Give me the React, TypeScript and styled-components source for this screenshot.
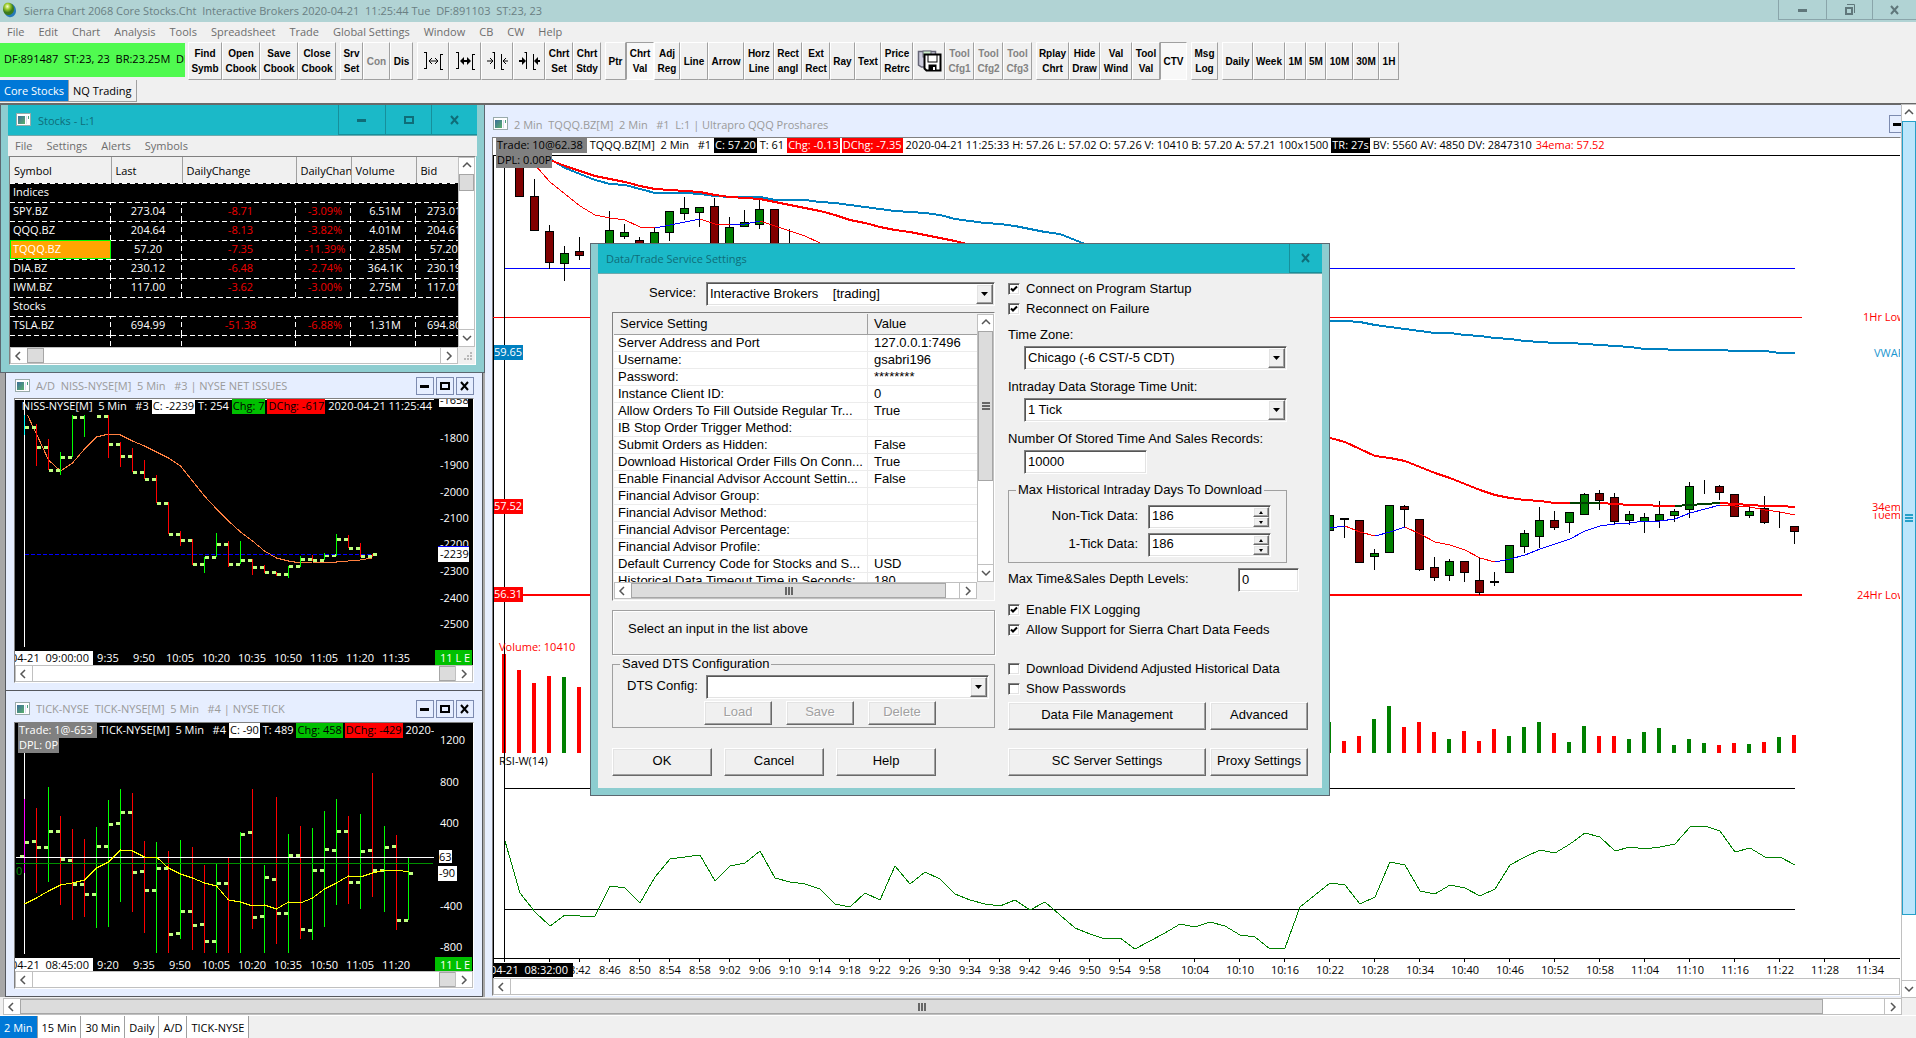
import React from 'react';
import styled, { createGlobalStyle, css } from 'styled-components';

const UI = '"Open Sans", "Noto Sans", sans-serif';
const DLG = '"Liberation Sans", Arial, sans-serif';

const Global = createGlobalStyle`
  *, *::before, *::after { box-sizing: border-box; }
  html, body { margin: 0; padding: 0; }
  body { background: #f0f0f0; font: 11px/15px ${UI}; color: #000; overflow: hidden; }
  button, input, select { font: inherit; color: inherit; margin: 0; border-radius: 0; }
  button { padding: 0; border: 0; background: none; }
`;

/* ---------- shell ---------- */

const Shell = styled.div`
  position: relative;
  display: flex;
  flex-direction: column;
  height: 100vh;
`;

const TitleBar = styled.header`
  display: flex;
  align-items: stretch;
  height: 22px;
  background: #b1d3d4;
  color: #6a7f83;
  white-space: pre;
`;

const AppTitle = styled.h1`
  display: flex;
  align-items: center;
  gap: 7px;
  margin: 0;
  padding: 0 0 2px 2px;
  flex: 1;
  font: inherit;
`;

const Controls = styled.div`
  display: flex;
  height: 20px;
`;

const CaptionButton = styled.button<{ $w: number; $line: string; $ink: string }>`
  display: flex;
  align-items: center;
  justify-content: center;
  width: ${p => p.$w}px;
  border: 1px solid ${p => p.$line};
  border-width: 0 0 1px 1px;
  color: ${p => p.$ink};
`;

const MenuBar = styled.nav`
  display: flex;
  align-items: center;
  gap: 14px;
  height: 20px;
  padding: 0 0 2px 7px;
  background: #f0f0f0;
  color: #6d6d6d;
`;

const Toolbar = styled.div`
  display: flex;
  align-items: stretch;
  gap: 4px;
  height: 38px;
`;

const Feed = styled.output`
  width: 185px;
  height: 34px;
  margin-top: 1px;
  padding-left: 4px;
  margin-right: -1px;
  background: #50fa50;
  line-height: 32px;
  white-space: pre;
  overflow: hidden;
`;

const ToolGroup = styled.div`
  display: flex;
`;

const Tool = styled.button<{ $w: number; $down?: boolean }>`
  display: flex;
  align-items: center;
  justify-content: center;
  width: ${p => p.$w}px;
  border: 1px solid;
  border-color: #fff #a0a0a0 #a0a0a0 #fff;
  font: bold 10px/15px ${DLG};
  text-align: center;
  &:disabled { color: #838383; }
  ${p => p.$down && css`
    background: #f8f8f8;
    border-color: #a0a0a0 #fff #fff #a0a0a0;
  `}
`;

const Tabs = styled.div<{ $h: number }>`
  display: flex;
  height: ${p => p.$h}px;
`;

const Tab = styled.button<{ $on?: boolean }>`
  height: 22px;
  padding: 0 4px;
  border-right: 1px solid #a0a0a0;
  background: ${p => (p.$on ? '#0078d7' : '#fff')};
  color: ${p => (p.$on ? '#fff' : '#000')};
  white-space: nowrap;
`;

const TopTab = styled(Tab)`
  background: ${p => (p.$on ? '#0078d7' : '#f0f0f0')};
  border-bottom: 1px solid #a0a0a0;
`;

/* ---------- workspace ---------- */

const Workspace = styled.main`
  flex: 1;
  min-height: 0;
  display: grid;
  grid-template: minmax(0, 1fr) 18px / minmax(0, 1fr) 15px;
  border-top: 2px solid #696969;
  border-bottom: 1px solid #fff;
`;

const Desk = styled.div`
  display: flex;
  min-height: 0;
  overflow: hidden;
  background: #a8a8a8;
`;

const LeftStack = styled.div`
  flex: none;
  display: flex;
  flex-direction: column;
  width: 485px;
`;

const Child = styled.section<{ $grow?: boolean }>`
  display: flex;
  flex-direction: column;
  flex: ${p => (p.$grow ? '1' : 'none')};
  min-height: 0;
  margin: 0 2px 0 5px;
  padding: 0 8px 7px;
  border: 1px solid #55585e;
  border-width: 0 1px 1px;
  background: #e6eeff;
`;

const MainChild = styled(Child)`
  flex: 1;
  min-width: 0;
  margin: 0;
  padding: 0 0 1px 7px;
  border-width: 0;
`;

const ChildTitle = styled.h2<{ $h: number; $drop?: number }>`
  display: flex;
  align-items: center;
  gap: 5px;
  flex: none;
  height: ${p => p.$h}px;
  margin: 0;
  padding: ${p => p.$drop ?? 0}px 0 0 1px;
  color: #9a9a9a;
  font: inherit;
  white-space: pre;
`;

const TitleText = styled.span`
  flex: 1;
`;

const SmallButton = styled.button<{ $cut?: boolean }>`
  display: flex;
  align-items: center;
  justify-content: center;
  width: 18px;
  height: 18px;
  margin-left: -3px;
  margin-right: ${p => (p.$cut ? -6 : 0)}px;
  border: 1px solid #7d8bb0;
  color: #000;
`;

const ChartFrame = styled.div`
  position: relative;
  flex: 1;
  min-height: 0;
  display: flex;
  flex-direction: column;
  border: 1px solid #808080;
  border-right-color: #fff;
  border-bottom-color: #fff;
  background: #fff;
`;

const Canvas = styled.div<{ $bg: string }>`
  position: relative;
  flex: 1;
  min-height: 0;
  overflow: hidden;
  background: ${p => p.$bg};
  & > svg { display: block; }
`;

const Info = styled.div<{ $w?: number; $ink: string }>`
  position: absolute;
  top: 0;
  left: 3px;
  width: ${p => (p.$w ? p.$w + 'px' : 'auto')};
  display: flex;
  gap: 2px;
  overflow: hidden;
  color: ${p => p.$ink};
  white-space: pre;
`;

const Tag = styled.span<{ $bg?: string; $ink?: string }>`
  padding: 0 1px 2px;
  background: ${p => p.$bg ?? 'transparent'};
  color: ${p => p.$ink ?? 'inherit'};
  line-height: 13px;
`;

const Dpl = styled(Tag)`
  position: absolute;
  top: 15px;
  left: 3px;
`;

const Track = styled.div<{ $vertical?: boolean }>`
  display: flex;
  flex-direction: ${p => (p.$vertical ? 'column' : 'row')};
  flex: none;
  ${p => (p.$vertical ? 'width: 17px;' : 'height: 17px;')}
  border: 1px solid #c0c0c0;
  background: #fff;
`;

const ArrowButton = styled.button<{ $vertical?: boolean }>`
  display: flex;
  flex: none;
  align-items: center;
  justify-content: center;
  ${p => (p.$vertical ? 'height: 16px; width: 100%;' : 'width: 16px; height: 100%;')}
  outline: 1px solid #c0c0c0;
  background: #fff;
  color: #555;
`;

const Thumb = styled.div<{ $size?: string; $blue?: boolean }>`
  display: flex;
  align-items: center;
  justify-content: center;
  flex: ${p => (p.$size ? `0 0 ${p.$size}` : '1')};
  border: 1px solid ${p => (p.$blue ? '#26a0c8' : '#a6a6a6')};
  background: ${p => (p.$blue ? '#bce6fc' : '#dcdcdc')};
`;

const Gap = styled.div<{ $size?: string }>`
  flex: ${p => (p.$size ? `0 0 ${p.$size}` : '1')};
`;

const VWrap = styled.div`
  display: flex;
  & > div { width: 15px; border-width: 0 0 0 1px; }
`;

const HWrap = styled.div`
  grid-column: 1 / -1;
  padding: 1px 14px 0 3px;
`;

/* ---------- quote window ---------- */

const Quote = styled.section`
  flex: none;
  height: 268px;
  display: flex;
  flex-direction: column;
  padding: 0 7px 7px;
  border: 1px solid #5c6770;
  border-top: 0;
  background: #8dcdd0;
`;

const QuoteTitle = styled.h2`
  display: flex;
  flex: none;
  height: 31px;
  margin: 0;
  border-bottom: 1px solid #6fa9ad;
  background: #1bb9c8;
  color: #0f6d78;
  font: inherit;
`;

const QuoteName = styled.span`
  display: flex;
  align-items: center;
  gap: 6px;
  flex: 1;
  padding-left: 8px;
`;

const QuoteControls = styled(Controls)`
  height: 30px;
`;

const QuoteBody = styled.div`
  flex: 1;
  min-height: 0;
  display: grid;
  grid-template: minmax(0, 1fr) 17px / minmax(0, 1fr) 17px;
  margin: 0 1px;
  border: 1px solid #808080;
  border-right-color: #fff;
  border-bottom-color: #fff;
  background: #f0f0f0;
`;

const QuoteView = styled.div`
  overflow: hidden;
  background: #000;
`;

const QuoteTable = styled.table`
  width: 520px;
  table-layout: fixed;
  border-collapse: collapse;
  color: #fff;
  th {
    height: 26px;
    padding: 0 0 0 4px;
    overflow: hidden;
    border-right: 1px solid #a0a0a0;
    background: #f0f0f0;
    color: #000;
    font-weight: normal;
    text-align: left;
  }
`;

const dashH = 'repeating-linear-gradient(90deg, #fff 0 5px, transparent 5px 8px)';
const dashV = 'repeating-linear-gradient(0deg, #fff 0 5px, transparent 5px 8px)';

const QCell = styled.td<{ $red?: boolean; $left?: boolean; $bid?: boolean; $sel?: boolean; $group?: boolean }>`
  height: 19px;
  padding: 0 0 2px 3px;
  text-align: ${p => (p.$left || p.$bid ? 'left' : 'center')};
  color: ${p => (p.$red ? '#f00000' : '#fff')};
  background: ${p => (p.$group
    ? `${dashH} 0 0 / 100% 1px no-repeat`
    : `${dashH} 0 0 / 100% 1px no-repeat, ${dashV} 100% 0 / 1px 100% no-repeat`)};
  ${p => p.$bid && css`padding-left: 11px;`}
  ${p => p.$sel && css`
    background: #ffa500;
    box-shadow: inset 0 0 0 1px #00ff00;
  `}
`;

/* ---------- dialog ---------- */

const Dialog = styled.section`
  position: absolute;
  left: 590px;
  top: 243px;
  width: 740px;
  border: 1px solid #5c6770;
  background: #8dcdd0;
  padding: 0 7px 7px;
  font: 13px/18px ${DLG};
`;

const DialogTitle = styled.h2`
  display: flex;
  height: 30px;
  margin: 0;
  border-bottom: 1px solid #6fa9ad;
  background: #1bb9c8;
  color: #0f6d78;
  font: 11px/29px ${UI};
`;

const DialogName = styled.span`
  flex: 1;
  padding-left: 8px;
`;

const Form = styled.form`
  display: flex;
  gap: 13px;
  padding: 0 0 12px 14px;
  background: #f0f0f0;
`;

const LeftCol = styled.div`
  display: flex;
  flex-direction: column;
  width: 383px;
  padding-top: 8px;
`;

const RightCol = styled.div`
  display: flex;
  flex-direction: column;
  width: 300px;
  padding-top: 5px;
`;

const sunken = css`
  border: 1px solid;
  border-color: #808080 #fff #fff #808080;
  box-shadow: inset 1px 1px 0 #555, inset -1px -1px 0 #e3e3e3;
  background: #fff;
`;

const Sunken = styled.div<{ $w?: number }>`
  display: grid;
  flex: none;
  width: ${p => (p.$w ? p.$w + 'px' : 'auto')};
  height: 24px;
  padding: 1px;
  ${sunken}
  & > * { grid-area: 1 / 1; min-width: 0; }
`;

const Select = styled.select`
  appearance: none;
  border: 0;
  padding: 0 2px;
  background: transparent;
  outline: 0;
`;

const Input = styled.input<{ $w: number }>`
  width: ${p => p.$w}px;
  height: 24px;
  padding: 0 3px 2px;
  outline: 0;
  ${sunken}
`;

const raised = css`
  border: 1px solid;
  border-color: #fff #696969 #696969 #fff;
  box-shadow: inset -1px -1px 0 #a0a0a0, inset 1px 1px 0 #e3e3e3;
  background: #f0f0f0;
`;

const Drop = styled.span`
  display: flex;
  align-items: center;
  justify-content: center;
  justify-self: end;
  width: 17px;
  pointer-events: none;
  ${raised}
`;

const Spin = styled.span`
  display: grid;
  justify-self: end;
  width: 16px;
`;

const SpinButton = styled.button`
  display: flex;
  align-items: center;
  justify-content: center;
  ${raised}
`;

const SpinInput = styled.input`
  border: 0;
  padding: 0 2px 2px;
  background: transparent;
  outline: 0;
  width: 100%;
`;

const Push = styled.button<{ $w: number; $small?: boolean }>`
  flex: none;
  width: ${p => p.$w}px;
  height: ${p => (p.$small ? 24 : 28)}px;
  padding-bottom: 2px;
  ${raised}
  &:disabled { color: #a0a0a0; text-shadow: 1px 1px 0 #fff; }
`;

const Row = styled.div<{ $gap?: number; $top?: number; $left?: number }>`
  display: flex;
  align-items: center;
  gap: ${p => p.$gap ?? 0}px;
  margin-top: ${p => p.$top ?? 0}px;
  padding-left: ${p => p.$left ?? 0}px;
`;

const RowLabel = styled.label<{ $w: number; $end?: boolean }>`
  flex: none;
  width: ${p => p.$w}px;
  text-align: ${p => (p.$end ? 'right' : 'left')};
  padding: 0 ${p => (p.$end ? 10 : 0)}px 2px 0;
  white-space: nowrap;
`;

const Field = styled.div`
  display: grid;
  grid-template-rows: 18px 24px;
  gap: 2px;
  padding: 7px 0 1px;
  & > :last-child { margin-left: 16px; }
`;

const Check = styled.label`
  display: flex;
  align-items: center;
  gap: 6px;
  height: 20px;
`;

const Box = styled.input`
  appearance: none;
  width: 12px;
  height: 12px;
  ${sunken}
  &:checked {
    background: #fff url("data:image/svg+xml,%3Csvg xmlns='http://www.w3.org/2000/svg' width='8' height='8'%3E%3Cpath d='M1 3.5L3 5.5L7 1.5' fill='none' stroke='black' stroke-width='2'/%3E%3C/svg%3E") center no-repeat;
  }
`;

const Checks = styled.div<{ $top: number }>`
  margin-top: ${p => p.$top}px;
`;

const Group = styled.fieldset<{ $w: number; $top: number; $h: number }>`
  width: ${p => p.$w}px;
  height: ${p => p.$h}px;
  min-width: 0;
  margin: ${p => p.$top}px 0 0;
  padding: 0;
  border: 1px solid #a0a0a0;
  & > legend { margin-left: 7px; padding: 0 2px; line-height: 18px; white-space: nowrap; }
`;

const Hint = styled.output`
  height: 45px;
  margin-top: 9px;
  padding: 0 15px;
  border: 1px solid #a0a0a0;
  box-shadow: inset 1px 1px 0 #fff, 1px 1px 0 #fff;
  line-height: 35px;
`;

const ListBox = styled.div`
  display: grid;
  grid-template: minmax(0, 1fr) 17px / minmax(0, 1fr) 17px;
  height: 289px;
  margin-top: 6px;
  padding: 1px 0 1px 1px;
  border: 1px solid;
  border-color: #808080 #fff #fff #808080;
  background: #f0f0f0;
`;

const ListView = styled.div`
  overflow: hidden;
  background: #fff;
`;

const ListTable = styled.table`
  width: 100%;
  table-layout: fixed;
  border-collapse: separate;
  border-spacing: 0;
  white-space: nowrap;
  th {
    height: 21px;
    padding: 0 6px;
    border-right: 1px solid #a0a0a0;
    border-bottom: 1px solid #a0a0a0;
    background: #f0f0f0;
    font-weight: normal;
    text-align: left;
  }
  th:last-child { border-right: 0; }
  td {
    height: 17px;
    padding: 0 0 0 4px;
    overflow: hidden;
    border-right: 1px solid #ececec;
    border-bottom: 1px solid #ececec;
    line-height: 16px;
  }
  td:last-child { padding-left: 6px; border-right: 0; }
`;

/* ---------- glyphs ---------- */

const Chevron = ({ dir }: { dir: 'left' | 'right' | 'up' | 'down' }) => {
  const d = { left: 'M6 1L2 5L6 9', right: 'M3 1L7 5L3 9', up: 'M1 6L5 2L9 6', down: 'M1 3L5 7L9 3' }[dir];
  return <svg width="10" height="10" fill="none" stroke="currentColor" strokeWidth="1.500"><path d={d} /></svg>;
};

const MinGlyph = () => <svg width="10" height="10"><rect y="4" width="9" height="3" fill="currentColor" /></svg>;
const MaxGlyph = () => (
  <svg width="10" height="10"><rect x="1" y="2" width="8" height="6" fill="none" stroke="currentColor" strokeWidth="2" /></svg>
);
const CloseGlyph = () => (
  <svg width="10" height="10" stroke="currentColor" strokeWidth="2"><path d="M1 1L8 9M8 1L1 9" /></svg>
);
const RestoreGlyph = () => (
  <svg width="12" height="12" fill="none" stroke="currentColor">
    <rect x="2" y="4" width="6" height="6" strokeWidth="2" /><path d="M3 0.5H10.500V9" />
  </svg>
);

const WindowIcon = () => (
  <svg width="16" height="14">
    <defs><linearGradient id="wi" x2="1" y2="1"><stop stopColor="#3c6e9c" /><stop offset="1" stopColor="#59b06b" /></linearGradient></defs>
    <rect x="0.500" y="0.500" width="14" height="12" fill="#fff" stroke="#9aa" />
    <rect x="2" y="3" width="7" height="8" fill="url(#wi)" />
    <rect x="12" y="3" width="1" height="3" fill="#4ba27c" /><rect x="10" y="3" width="1" height="8" fill="#dde" />
  </svg>
);

const Globe = () => (
  <svg width="15" height="16">
    <defs><radialGradient id="gl" cx="0.4" cy="0.300"><stop stopColor="#f8ffd0" /><stop offset="0.500" stopColor="#9bc92a" /><stop offset="1" stopColor="#3c7a1c" /></radialGradient></defs>
    <path d="M5 2C10 0 14 4 14 9C14 13 10 16 7 15C3 14 2 10 2 7C2 4 3 3 5 2Z" fill="#2779b8" />
    <path d="M4 1C9 0 12 3 12 7C12 11 9 13 6 13C3 13 1 10 1 7C1 4 2 2 4 1Z" fill="url(#gl)" />
  </svg>
);

const Spread = ({ bold, inward }: { bold?: boolean; inward?: boolean }) => (
  <svg width="21" height="20" fill="none" stroke="#000">
    {inward ? (
      <>
        <path d="M7.500 1V18M14.500 3V19M5.500 1.500H7M14.500 18.500H17" />
        <path d={bold ? 'M0 10H4M21 10H17' : 'M0 10H6M21 10H16'} strokeWidth={bold ? 2 : 1} />
        {bold ? <path d="M3 6L7 10L3 14ZM19 6L15 10L19 14Z" fill="#000" stroke="none" /> : <path d="M3 7L6 10L3 13M19 7L16 10L19 13" />}
      </>
    ) : (
      <>
        <path d="M3.500 1V18M17.500 3V19M1 1.500H3M1 17.500H3M17.500 3.500H20M17.500 18.500H20" />
        <path d="M6 10H15" strokeWidth={bold ? 2 : 1} />
        {bold ? <path d="M9 6L5 10L9 14ZM12 6L16 10L12 14Z" fill="#000" stroke="none" /> : <path d="M9 7L6 10L9 13M12 7L15 10L12 13" />}
      </>
    )}
  </svg>
);

const Disks = () => (
  <svg width="25" height="22" fill="#fff" stroke="#000">
    <path d="M1.500 1.500H18.500V17H4.500L1.500 15Z" stroke="#667" strokeWidth="1.500" fill="#ccd" />
    <rect x="6" y="1" width="8" height="6" fill="#cec" stroke="#667" />
    <path d="M7.500 4.500H23.500V20.500H9.500L7.500 18.500Z" strokeWidth="2" />
    <rect x="11" y="5" width="9" height="7" /><rect x="12" y="15" width="7" height="5" fill="#000" />
    <rect x="16" y="17" width="2" height="3" stroke="none" />
  </svg>
);

const DownTri = () => <svg width="7" height="4"><path d="M0 0H7L3.500 4Z" /></svg>;
const SpinTri = ({ up }: { up?: boolean }) => <svg width="4" height="3"><path d={up ? 'M0 3H4L2 0Z' : 'M0 0H4L2 3Z'} /></svg>;
const Grip = ({ vertical, blue }: { vertical?: boolean; blue?: boolean }) => (
  <svg width="8" height="8" stroke={blue ? '#26a0c8' : '#666'} strokeWidth="2">
    <path d={vertical ? 'M0 1H8M0 4H8M0 7H8' : 'M1 0V8M4 0V8M7 0V8'} />
  </svg>
);
const SizeGrip = () => (
  <svg width="17" height="17" fill="#b8b8b8">
    {[[12, 5], [9, 8], [12, 8], [6, 11], [9, 11], [12, 11]].map(([x, y]) => <rect key={`${x}-${y}`} x={x} y={y} width="2" height="2" />)}
  </svg>
);

/* ---------- tool definitions ---------- */

type ToolDef = { t?: string; w: number; off?: boolean; down?: boolean; icon?: React.ReactNode };
const TOOLS: ToolDef[][] = [
  [{ t: 'Find Symb', w: 34 }, { t: 'Open Cbook', w: 38 }, { t: 'Save Cbook', w: 38 }, { t: 'Close Cbook', w: 38 }],
  [{ t: 'Srv Set', w: 23 }, { t: 'Con', w: 27, off: true }, { t: 'Dis', w: 23 }],
  [
    { icon: <Spread />, w: 32 }, { icon: <Spread bold />, w: 32 }, { icon: <Spread inward />, w: 32 }, { icon: <Spread inward bold />, w: 32 },
    { t: 'Chrt Set', w: 28 }, { t: 'Chrt Stdy', w: 28 },
  ],
  [
    { t: 'Ptr', w: 21 }, { t: 'Chrt Val', w: 28, down: true }, { t: 'Adj Reg', w: 26 }, { t: 'Line', w: 28 }, { t: 'Arrow', w: 36 },
    { t: 'Horz Line', w: 30 }, { t: 'Rect angl', w: 28 }, { t: 'Ext Rect', w: 28 }, { t: 'Ray', w: 25 }, { t: 'Text', w: 26 },
    { t: 'Price Retrc', w: 32 }, { icon: <Disks />, w: 32 }, { t: 'Tool Cfg1', w: 29, off: true }, { t: 'Tool Cfg2', w: 29, off: true },
    { t: 'Tool Cfg3', w: 29, off: true },
  ],
  [{ t: 'Rplay Chrt', w: 33 }, { t: 'Hide Draw', w: 31 }, { t: 'Val Wind', w: 32 }, { t: 'Tool Val', w: 28 }, { t: 'CTV', w: 27, down: true }],
  [{ t: 'Msg Log', w: 27 }],
  [
    { t: 'Daily', w: 31 }, { t: 'Week', w: 32 }, { t: '1M', w: 21 }, { t: '5M', w: 20 }, { t: '10M', w: 27 }, { t: '30M', w: 26 }, { t: '1H', w: 20 },
  ],
];

/* ---------- main chart ---------- */

const bx = (i: number) => 505 + 15 * i;
const line = (from: number, ys: number[]) => ys.map((y, i) => `${bx(from + i)},${y}`).join(' ');

// bar, colour, body top, body bottom, wick top, wick bottom
type Candle = [number, 'g' | 'r', number, number, number, number];
const CANDLES: Candle[] = [
  [1, 'r', 150, 196, 150, 196], [2, 'r', 196, 230, 179, 230], [3, 'r', 231, 262, 225, 268], [4, 'g', 253, 263, 246, 280],
  [5, 'r', 251, 255, 237, 259], [7, 'g', 230, 260, 211, 260], [8, 'g', 232, 236, 224, 238], [9, 'r', 240, 260, 237, 260],
  [10, 'g', 232, 260, 228, 260], [11, 'g', 211, 232, 211, 240], [12, 'g', 208, 213, 197, 219], [13, 'g', 207, 212, 207, 226],
  [14, 'r', 206, 260, 198, 260], [15, 'g', 227, 260, 217, 260], [16, 'g', 222, 226, 210, 226], [17, 'g', 209, 224, 200, 228],
  [18, 'r', 209, 260, 209, 260], [19, 'r', 260, 270, 229, 270],
  [55, 'g', 515, 530, 515, 530], [56, 'r', 518, 519, 518, 537], [57, 'r', 520, 562, 520, 562], [58, 'g', 553, 556, 549, 569],
  [59, 'g', 505, 552, 505, 552], [60, 'r', 506, 509, 505, 527], [61, 'r', 519, 569, 519, 570], [62, 'r', 567, 577, 557, 580],
  [63, 'g', 561, 575, 559, 580], [64, 'r', 561, 572, 561, 581], [65, 'r', 580, 592, 557, 594], [66, 'r', 581, 582, 572, 585],
  [67, 'g', 545, 572, 545, 572], [68, 'g', 533, 546, 530, 552], [69, 'g', 520, 536, 507, 547], [70, 'r', 520, 527, 511, 529],
  [71, 'g', 512, 522, 512, 532], [72, 'g', 494, 514, 493, 514], [73, 'r', 493, 500, 490, 509], [74, 'r', 497, 521, 493, 523],
  [75, 'g', 514, 520, 511, 524], [76, 'g', 517, 521, 513, 532], [77, 'g', 514, 520, 501, 527], [78, 'g', 511, 515, 509, 521],
  [79, 'g', 486, 509, 482, 517], [80, 'r', 486, 486, 480, 493], [81, 'r', 486, 492, 485, 499], [82, 'r', 494, 516, 494, 516],
  [83, 'g', 511, 515, 505, 517], [84, 'r', 508, 522, 496, 523], [85, 'r', 522, 522, 512, 527], [86, 'r', 526, 531, 526, 543],
];

const VWAP_A = [159, 168, 174, 180, 184, 185, 189, 193, 193, 193, 194, 196, 197, 197, 197, 200, 200, 200, 202, 203, 205, 207, 209, 211, 212, 213, 215, 219, 221, 223, 224, 226, 229, 232, 234, 240, 246];
const EMA_A = [160, 166, 171, 176, 179, 182, 186, 189, 190, 191, 192, 195, 197, 198, 199, 202, 205, 208, 211, 215, 220, 223, 227, 230, 232, 235, 238, 241, 245];
const FAST_A = [165, 182, 194, 206, 215, 218, 220, 227, 228, 225, 222, 219, 224, 224, 224, 221, 226, 231, 236, 243];
const VWAP_B = [321, 321, 322, 325, 327, 329, 331, 333, 333, 335, 336, 338, 339, 341, 342, 343, 343, 344, 345, 346, 347, 349, 349, 350, 350, 350, 350, 351, 351, 351, 353, 353];
const EMA_B = [438, 442, 449, 456, 458, 461, 467, 473, 478, 484, 490, 495, 498, 500, 501, 503, 503, 503, 503, 504, 505, 505, 506, 506, 505, 504, 503, 504, 505, 506, 506, 507];
const FAST_B = [528, 526, 532, 536, 532, 527, 534, 542, 545, 550, 558, 562, 559, 555, 549, 544, 539, 531, 526, 524, 523, 521, 521, 519, 513, 509, 505, 506, 507, 510, 512, 515];
const RSI = [
  841, 893, 912, 926, 915, 916, 916, 886, 888, 903, 877, 859, 857, 855, 881, 866, 863, 851, 878, 882, 884, 889, 904, 907, 893, 900, 866, 884, 872,
  879, 894, 900, 904, 906, 900, 910, 902, 915, 928, 934, 939, 938, 949, 941, 933, 924, 927, 922, 926, 935, 937, 949, 948, 907, 895, 883, 885, 904,
  897, 862, 865, 891, 894, 885, 888, 896, 889, 865, 857, 850, 853, 844, 833, 837, 851, 847, 849, 847, 844, 827, 826, 831, 852, 848, 857, 857, 865,
];
const VOL_A: [number, string][] = [[654, 'r'], [670, 'r'], [683, 'r'], [676, 'r'], [677, 'g'], [687, 'r']];
const VOL_B: [number, string][] = [
  [722, 'g'], [741, 'r'], [736, 'r'], [719, 'g'], [706, 'g'], [727, 'r'], [722, 'r'], [732, 'r'], [739, 'g'], [731, 'r'], [741, 'r'], [729, 'r'],
  [736, 'g'], [727, 'g'], [722, 'g'], [733, 'r'], [742, 'g'], [726, 'g'], [736, 'r'], [736, 'r'], [739, 'g'], [732, 'g'], [728, 'g'], [745, 'g'],
  [739, 'g'], [743, 'g'], [745, 'r'], [743, 'r'], [744, 'g'], [742, 'r'], [737, 'g'], [735, 'r'],
];

const clock = (bar: number) => {
  const m = 8 * 60 + 32 + bar * 2;
  return `${Math.floor(m / 60)}:${String(m % 60).padStart(2, '0')}`;
};
const TIME_BARS = [...Array.from({ length: 20 }, (_, i) => 5 + 2 * i), ...Array.from({ length: 16 }, (_, i) => 46 + 3 * i)];

const SvgText = styled.text<{ $mid?: boolean }>`
  font: 11px ${UI};
  text-anchor: ${p => (p.$mid ? 'middle' : 'start')};
  white-space: pre;
`;

const MainChart = () => (
  <svg width="1408" height="840" viewBox="493 138 1408 840" fill="none" shapeRendering="crispEdges">
    <path d="M493 155.500H1901M493.500 155V978" stroke="#000" />
    <path d="M505 268.500H1795" stroke="#00f" />
    <path d="M493 317.500H1802" stroke="#f00" />
    <path d="M505 595H1802" stroke="#f00" strokeWidth="2" />
    <path d="M505 788.500H1795M505 909.500H1795M493 958.500H1901" stroke="#000" />
    {VOL_A.map(([y, c], i) => <rect key={i} x={bx(i) - 3} y={y} width="4" height={753 - y} fill={c === 'g' ? '#008000' : '#f00'} />)}
    {VOL_B.map(([y, c], i) => <rect key={i} x={bx(i + 55) - 3} y={y} width="4" height={753 - y} fill={c === 'g' ? '#008000' : '#f00'} />)}
    <path d="M504.500 168V961" stroke="#000" />
    {TIME_BARS.concat(0, 3).map(i => <path key={i} d={`M${bx(i) - 0.5} 958V962`} stroke="#000" />)}
    {CANDLES.map(([i, c, t, b, wt, wb]) => (
      <g key={i} stroke="#000">
        <path d={`M${bx(i) - 0.5} ${wt}V${wb + 1}`} />
        <rect x={bx(i) - 4.5} y={t + 0.5} width="8" height={b - t} fill={c === 'g' ? '#008000' : '#800000'} />
      </g>
    ))}
    <g strokeWidth="2">
      <polyline points={line(3, VWAP_A)} stroke="#0080c0" />
      <polyline points={line(55, VWAP_B)} stroke="#0080c0" />
      <polyline points={line(3, EMA_A)} stroke="#f00" />
      <polyline points={line(55, EMA_B)} stroke="#f00" />
      <polyline points={line(71, EMA_B.slice(16, 19))} stroke="#004000" />
      <polyline points={line(78, EMA_B.slice(23, 27))} stroke="#004000" />
    </g>
    <polyline points={line(2, FAST_A)} stroke="#f00" />
    <polyline points={line(10, FAST_A.slice(8, 12))} stroke="#00f" />
    <polyline points={line(15, FAST_A.slice(13, 16))} stroke="#00f" />
    <polyline points={line(55, FAST_B)} stroke="#f00" />
    <polyline points={line(55, FAST_B.slice(0, 2))} stroke="#00f" />
    <polyline points={line(58, FAST_B.slice(3, 6))} stroke="#00f" />
    <polyline points={line(66, FAST_B.slice(11, 27))} stroke="#00f" />
    <polyline points={line(0, RSI)} stroke="#008000" />
    <rect x="494" y="345" width="29" height="15" fill="#0080c0" />
    <rect x="494" y="499" width="29" height="15" fill="#f00" />
    <rect x="494" y="587" width="29" height="15" fill="#f00" />
    <g fill="#fff">
      <SvgText x="494" y="356">59.65</SvgText>
      <SvgText x="494" y="510">57.52</SvgText>
      <SvgText x="494" y="598">56.31</SvgText>
    </g>
    <g fill="#f00">
      <SvgText x="1863" y="321">1Hr Low</SvgText>
      <SvgText x="1872" y="519">10ema</SvgText>
      <rect x="1870" y="500" width="31" height="13" fill="#fff" />
      <SvgText x="1872" y="511">34ema</SvgText>
      <SvgText x="1857" y="599">24Hr Low</SvgText>
      <SvgText x="499" y="651">Volume: 10410</SvgText>
    </g>
    <SvgText x="1874" y="357" fill="#1a96d0">VWAP</SvgText>
    <SvgText x="499" y="765" fill="#000">RSI-W(14)</SvgText>
    <g fill="#000">
      {TIME_BARS.map(i => <SvgText key={i} $mid x={bx(i)} y="974">{clock(i)}</SvgText>)}
    </g>
    <rect x="493" y="963" width="80" height="14" fill="#000" />
    <SvgText x="490" y="974" fill="#fff">{'04-21  08:32:00'}</SvgText>
  </svg>
);

/* ---------- small dark charts: values are held on a grid of three steps per pixel ---------- */

const px = (v: number) => Math.round(v / 3);
const sx = (i: number) => 24 + 12 * i;

// colour, high, low, open, close (0 = off the chart)
type Bar = [string, number, number, number, number];
const G = '#00ff00', R = '#ff0000';

const NISS: Bar[] = [
  ['#00ffff', 148, 208, 0, 184], [R, 174, 299, 184, 244], [R, 220, 313, 244, 313], [G, 259, 329, 313, 274], [G, 148, 274, 274, 154],
  [G, 148, 215, 154, 0], [R, 0, 0, 0, 151], [R, 148, 276, 151, 235], [R, 228, 302, 235, 271], [R, 247, 319, 271, 319], [R, 283, 340, 319, 340],
  [R, 328, 412, 340, 412], [R, 409, 505, 412, 505], [R, 496, 540, 505, 523], [R, 520, 598, 523, 595], [G, 573, 620, 595, 574],
  [G, 502, 574, 574, 535], [R, 526, 604, 535, 595], [G, 526, 595, 595, 583], [R, 580, 627, 583, 604], [R, 598, 622, 604, 619],
  [R, 619, 632, 619, 625], [G, 601, 638, 625, 601], [G, 571, 605, 601, 580], [R, 568, 586, 580, 583], [G, 562, 583, 583, 568],
  [G, 505, 571, 568, 520], [R, 508, 547, 520, 547], [R, 532, 573, 547, 571], [R, 565, 575, 571, 565],
];
const NISS_MA = [130, 205, 283, 316, 290, 248, 214, 205, 208, 226, 241, 257, 275, 301, 344, 391, 428, 464, 497, 526, 556, 577, 586, 592, 589, 589, 589, 584, 581, 577];

const TICK: Bar[] = [
  ['#ff00ff', 327, 549, 498, 457], [R, 354, 609, 454, 472], [G, 291, 576, 472, 424], [R, 378, 645, 424, 508], [R, 417, 690, 511, 583],
  [R, 447, 681, 583, 613], [G, 411, 714, 613, 469], [G, 330, 711, 469, 403], [G, 297, 636, 400, 367], [R, 309, 666, 367, 547],
  [R, 453, 729, 544, 601], [G, 456, 789, 601, 535], [R, 483, 789, 535, 733], [G, 450, 747, 730, 664], [R, 471, 780, 664, 706],
  [R, 525, 789, 703, 754], [G, 520, 789, 754, 580], [R, 504, 789, 580, 0], [G, 426, 789, 0, 433], [R, 297, 717, 427, 682],
  [G, 525, 789, 679, 562], [R, 321, 762, 568, 670], [G, 432, 789, 670, 496], [R, 408, 747, 496, 718], [G, 414, 750, 721, 541],
  [G, 363, 711, 541, 478], [G, 327, 645, 481, 424], [R, 378, 642, 424, 577], [G, 372, 657, 577, 484], [R, 249, 621, 481, 541],
  [G, 408, 666, 541, 472], [R, 435, 720, 469, 691], [G, 504, 691, 691, 550],
];
const TICK_MA = [643, 625, 603, 586, 580, 571, 535, 516, 481, 484, 500, 502, 534, 551, 565, 580, 588, 630, 636, 649, 646, 658, 637, 640, 625, 598, 580, 559, 562, 549, 541, 541, 547];

const Bars = ({ bars }: { bars: Bar[] }) => (
  <g shapeRendering="crispEdges">
    {bars.map(([c, h, l], i) => <rect key={i} x={sx(i)} y={px(h)} width="1" height={px(l - h)} fill={c} />)}
    {bars.map(([, , , o, cl], i) => (
      <g key={i} fill="#c0ff80">
        {o > 0 && <rect x={sx(i) - 4} y={px(o) - 1} width="4" height="3" />}
        {cl > 0 && <rect x={sx(i) + 1} y={px(cl) - 1} width="4" height="3" />}
      </g>
    ))}
  </g>
);

const Average = ({ ys, color }: { ys: number[]; color: string }) => (
  <polyline points={ys.map((y, i) => `${sx(i) + 0.5},${px(y)}`).join(' ')} fill="none" stroke={color} shapeRendering="crispEdges" />
);

const Times = ({ y, labels, start }: { y: number; labels: string[]; start: string }) => (
  <g>
    <g fill="#fff">{labels.map((t, i) => <SvgText key={t} $mid x={108 + 36 * i} y={y}>{t}</SvgText>)}</g>
    <rect x="15" y={y - 11} width="78" height="14" fill="#fff" />
    <SvgText x="11" y={y}>{start}</SvgText>
    <rect x="435" y={y - 12} width="37" height="15" fill="#00c000" />
    <SvgText x="440" y={y} fill="#fff">11 L E</SvgText>
  </g>
);

const NissChart = () => (
  <svg width="458" height="266" viewBox="15 33 458 266">
    <rect x="24" y="34" width="1" height="247" fill="#fff" />
    <Average ys={NISS_MA} color="#ff8040" />
    <Bars bars={NISS} />
    <path d="M25 188.500H373" stroke="#00f" strokeDasharray="4 2" />
    <rect x="15" y="33" width="420" height="16" fill="#000" />
    <rect x="24" y="34" width="1" height="15" fill="#fff" />
    <path d="M15 33.500H434" stroke="#fff" />
    <g fill="#fff">
      {[[-1800, 217], [-1900, 296], [-2000, 377], [-2100, 455], [-2200, 533], [-2300, 614], [-2400, 695], [-2500, 773]].map(([v, y]) => (
        <SvgText key={v} x="440" y={px(y) + 4}>{v}</SvgText>
      ))}
      <rect x="439" y="30" width="29" height="11" /><rect x="438" y="181" width="31" height="15" />
    </g>
    <path d="M438 180.500H469" stroke="#00f" />
    <SvgText x="440" y="38">-1658</SvgText>
    <SvgText x="440" y="192">-2239</SvgText>
    <Times y={296} start={'04-21  09:00:00'} labels={['9:35', '9:50', '10:05', '10:20', '10:35', '10:50', '11:05', '11:20', '11:35']} />
  </svg>
);

const TickChart = () => (
  <svg width="458" height="250" viewBox="15 33 458 250">
    <rect x="24" y="34" width="1" height="230" fill="#fff" />
    <Bars bars={TICK} />
    <path d="M16 167.500H434" stroke="#fff" /><path d="M16 173.500H433" stroke="#009000" />
    <Average ys={TICK_MA} color="#ff0" />
    <g fill="#fff">
      {[[1200, 149], [800, 275], [400, 398], [-400, 647], [-800, 770]].map(([v, y]) => (
        <SvgText key={v} x="440" y={px(y) + 4}>{v}</SvgText>
      ))}
      <rect x="439" y="160" width="13" height="13" /><rect x="438" y="176" width="19" height="15" />
    </g>
    <SvgText x="439" y="171">63</SvgText>
    <SvgText x="439" y="187">-90</SvgText>
    <SvgText x="16" y="185" fill="#009000">0</SvgText>
    <Times y={279} start={'04-21  08:45:00'} labels={['9:20', '9:35', '9:50', '10:05', '10:20', '10:35', '10:50', '11:05', '11:20']} />
  </svg>
);

/* ---------- pieces ---------- */

const Scroll = ({ vertical, open, children }: { vertical?: boolean; open?: boolean; children?: React.ReactNode }) => (
  <Track $vertical={vertical}>
    <ArrowButton type="button" $vertical={vertical} aria-label="Scroll back"><Chevron dir={vertical ? 'up' : 'left'} /></ArrowButton>
    {children}
    {!open && (
      <ArrowButton type="button" $vertical={vertical} aria-label="Scroll forward"><Chevron dir={vertical ? 'down' : 'right'} /></ArrowButton>
    )}
  </Track>
);

const Combo = ({ id, value, w }: { id: string; value: string; w?: number }) => (
  <Sunken $w={w}>
    <Select id={id} defaultValue={value}><option value={value}>{value}</option></Select>
    <Drop><DownTri /></Drop>
  </Sunken>
);

const Stepper = ({ id, value }: { id: string; value: string }) => (
  <Sunken $w={123}>
    <SpinInput id={id} defaultValue={value} />
    <Spin>
      <SpinButton type="button" aria-label="Increase"><SpinTri up /></SpinButton>
      <SpinButton type="button" aria-label="Decrease"><SpinTri /></SpinButton>
    </Spin>
  </Sunken>
);

const Option = ({ text, on }: { text: string; on?: boolean }) => (
  <Check><Box type="checkbox" defaultChecked={on} />{text}</Check>
);

const ChildButtons = () => (
  <>
    <SmallButton aria-label="Minimize"><MinGlyph /></SmallButton>
    <SmallButton aria-label="Maximize"><MaxGlyph /></SmallButton>
    <SmallButton aria-label="Close"><CloseGlyph /></SmallButton>
  </>
);

const QUOTES = [
  ['Indices'], ['SPY.BZ', '273.04', '-8.71', '-3.09%', '6.51M', '273.01'], ['QQQ.BZ', '204.64', '-8.13', '-3.82%', '4.01M', '204.61'],
  ['TQQQ.BZ', '57.20', '-7.35', '-11.39%', '2.85M', ' 57.20'], ['DIA.BZ', '230.12', '-6.48', '-2.74%', '364.1K', '230.19'],
  ['IWM.BZ', '117.00', '-3.62', '-3.00%', '2.75M', '117.01'], ['Stocks'], ['TSLA.BZ', '694.99', '-51.38', '-6.88%', '1.31M', '694.80'],
  ['', '', '', '', '', ''],
];

const SETTINGS = [
  ['Server Address and Port', '127.0.0.1:7496'], ['Username:', 'gsabri196'], ['Password:', '********'], ['Instance Client ID:', '0'],
  ['Allow Orders To Fill Outside Regular Tr...', 'True'], ['IB Stop Order Trigger Method:', ''], ['Submit Orders as Hidden:', 'False'],
  ['Download Historical Order Fills On Conn...', 'True'], ['Enable Financial Advisor Account Settin...', 'False'],
  ['Financial Advisor Group:', ''], ['Financial Advisor Method:', ''], ['Financial Advisor Percentage:', ''],
  ['Financial Advisor Profile:', ''], ['Default Currency Code for Stocks and S...', 'USD'], ['Historical Data Timeout Time in Seconds:', '180'],
];

const QuoteWindow = () => (
  <Quote>
    <QuoteTitle>
      <QuoteName><WindowIcon />Stocks - L:1</QuoteName>
      <QuoteControls>
        <CaptionButton $w={47} $line="#178f9b" $ink="#0f6d78" aria-label="Minimize"><MinGlyph /></CaptionButton>
        <CaptionButton $w={46} $line="#178f9b" $ink="#0f6d78" aria-label="Maximize"><MaxGlyph /></CaptionButton>
        <CaptionButton $w={46} $line="#178f9b" $ink="#0f6d78" aria-label="Close"><CloseGlyph /></CaptionButton>
      </QuoteControls>
    </QuoteTitle>
    <MenuBar>{['File', 'Settings', 'Alerts', 'Symbols'].map(m => <span key={m}>{m}</span>)}</MenuBar>
    <QuoteBody>
      <QuoteView>
        <QuoteTable>
          <colgroup>{[101, 71, 114, 55, 65, 114].map((w, i) => <col key={i} width={w} />)}</colgroup>
          <thead><tr>{['Symbol', 'Last', 'DailyChange', 'DailyChange', 'Volume', 'Bid'].map((h, i) => <th key={i}>{h}</th>)}</tr></thead>
          <tbody>
            {QUOTES.map((r, i) => (
              <tr key={i}>
                {r.length === 1
                  ? <QCell $left $group colSpan={6}>{r[0]}</QCell>
                  : r.map((c, k) => (
                    <QCell key={k} $left={k === 0} $bid={k === 5} $red={k === 2 || k === 3} $sel={c === 'TQQQ.BZ'}>
                      {c.replace(' ', '\u00a0')}
                    </QCell>
                  ))}
              </tr>
            ))}
          </tbody>
        </QuoteTable>
      </QuoteView>
      <Scroll vertical><Thumb $size="17px" /><Gap /></Scroll>
      <Scroll><Thumb $size="17px" /><Gap /></Scroll>
      <SizeGrip />
    </QuoteBody>
  </Quote>
);

const SettingsDialog = () => (
  <Dialog role="dialog" aria-label="Data/Trade Service Settings">
    <DialogTitle>
      <DialogName>Data/Trade Service Settings</DialogName>
      <CaptionButton $w={33} $line="#178f9b" $ink="#0f6d78" aria-label="Close"><CloseGlyph /></CaptionButton>
    </DialogTitle>
    <Form onSubmit={e => e.preventDefault()}>
      <LeftCol>
        <Row>
          <RowLabel $w={94} $end htmlFor="service">Service:</RowLabel>
          <Combo id="service" w={289} value={'Interactive Brokers\u00a0\u00a0\u00a0\u00a0[trading]'} />
        </Row>
        <ListBox>
          <ListView>
            <ListTable>
              <colgroup><col width="254" /><col /></colgroup>
              <thead><tr><th>Service Setting</th><th>Value</th></tr></thead>
              <tbody>{SETTINGS.map(([k, v]) => <tr key={k}><td>{k}</td><td>{v}</td></tr>)}</tbody>
            </ListTable>
          </ListView>
          <Scroll vertical><Thumb $size="150px"><Grip vertical /></Thumb><Gap /></Scroll>
          <Scroll><Thumb $size="315px"><Grip /></Thumb><Gap /></Scroll>
        </ListBox>
        <Hint>Select an input in the list above</Hint>
        <Group $w={383} $top={0} $h={73}>
          <legend>Saved DTS Configuration</legend>
          <Row $left={14} $top={2}>
            <RowLabel $w={79} htmlFor="dts">DTS Config:</RowLabel>
            <Combo id="dts" w={283} value="" />
          </Row>
          <Row $left={91} $top={2} $gap={14}>
            {['Load', 'Save', 'Delete'].map(b => <Push key={b} type="button" disabled $small $w={68}>{b}</Push>)}
          </Row>
        </Group>
        <Row $top={20} $gap={12}>
          {['OK', 'Cancel', 'Help'].map(b => <Push key={b} type="button" $w={100}>{b}</Push>)}
        </Row>
      </LeftCol>
      <RightCol>
        <Option on text="Connect on Program Startup" />
        <Option on text="Reconnect on Failure" />
        <Field><label htmlFor="tz">Time Zone:</label><Combo id="tz" w={263} value="Chicago (-6 CST/-5 CDT)" /></Field>
        <Field><label htmlFor="unit">Intraday Data Storage Time Unit:</label><Combo id="unit" w={263} value="1 Tick" /></Field>
        <Field><label htmlFor="rec">Number Of Stored Time And Sales Records:</label><Input id="rec" $w={123} defaultValue="10000" /></Field>
        <Group $w={279} $top={6} $h={82}>
          <legend>Max Historical Intraday Days To Download</legend>
          <Row $top={6}><RowLabel $w={139} $end htmlFor="nt">Non-Tick Data:</RowLabel><Stepper id="nt" value="186" /></Row>
          <Row $top={4}><RowLabel $w={139} $end htmlFor="ot">1-Tick Data:</RowLabel><Stepper id="ot" value="186" /></Row>
        </Group>
        <Row $top={5}>
          <RowLabel $w={230} htmlFor="depth">Max Time&amp;Sales Depth Levels:</RowLabel>
          <Input id="depth" $w={61} defaultValue="0" />
        </Row>
        <Checks $top={8}>
          <Option on text="Enable FIX Logging" />
          <Option on text="Allow Support for Sierra Chart Data Feeds" />
        </Checks>
        <Checks $top={19}>
          <Option text="Download Dividend Adjusted Historical Data" />
          <Option text="Show Passwords" />
        </Checks>
        <Row $top={3} $gap={4}>
          <Push type="button" $w={198}>Data File Management</Push><Push type="button" $w={98}>Advanced</Push>
        </Row>
        <Row $top={18} $gap={4}>
          <Push type="button" $w={198}>SC Server Settings</Push><Push type="button" $w={98}>Proxy Settings</Push>
        </Row>
      </RightCol>
    </Form>
  </Dialog>
);

export default function App() {
  return (
    <Shell>
      <Global />
      <TitleBar>
        <AppTitle><Globe />{'Sierra Chart 2068 Core Stocks.Cht  Interactive Brokers 2020-04-21  11:25:44 Tue  DF:891103  ST:23, 23'}</AppTitle>
        <Controls>
          <CaptionButton $w={48} $line="#8aa5aa" $ink="#60777b" aria-label="Minimize"><MinGlyph /></CaptionButton>
          <CaptionButton $w={46} $line="#8aa5aa" $ink="#60777b" aria-label="Restore"><RestoreGlyph /></CaptionButton>
          <CaptionButton $w={44} $line="#8aa5aa" $ink="#60777b" aria-label="Close"><CloseGlyph /></CaptionButton>
        </Controls>
      </TitleBar>
      <MenuBar>
        {['File', 'Edit', 'Chart', 'Analysis', 'Tools', 'Spreadsheet', 'Trade', 'Global Settings', 'Window', 'CB', 'CW', 'Help'].map(m => <span key={m}>{m}</span>)}
      </MenuBar>
      <Toolbar>
        <Feed>{'DF:891487  ST:23, 23  BR:23.25M  DR:0'}</Feed>
        {TOOLS.map((g, i) => (
          <ToolGroup key={i}>
            {g.map((t, k) => <Tool key={k} $w={t.w} $down={t.down} disabled={t.off} aria-label={t.t ?? 'Chart tool'}>{t.icon ?? t.t}</Tool>)}
          </ToolGroup>
        ))}
      </Toolbar>
      <Tabs $h={23}><TopTab $on>Core Stocks</TopTab><TopTab>NQ Trading</TopTab></Tabs>
      <Workspace>
        <Desk>
          <LeftStack>
            <QuoteWindow />
            <Child>
              <ChildTitle $h={25}><WindowIcon /><TitleText>{'A/D  NISS-NYSE[M]  5 Min   #3 | NYSE NET ISSUES'}</TitleText><ChildButtons /></ChildTitle>
              <ChartFrame>
                <Canvas $bg="#000">
                  <NissChart />
                  <Info $w={416} $ink="#fff">
                    <Tag>{' NISS-NYSE[M]  5 Min   #3'}</Tag><Tag $bg="#fff" $ink="#000">C: -2239</Tag><Tag>T: 254</Tag>
                    <Tag $bg="#00c000" $ink="#000">Chg: 7</Tag><Tag $bg="#f00" $ink="#000">DChg: -617</Tag><Tag>2020-04-21 11:25:44</Tag>
                  </Info>
                </Canvas>
                <Scroll><Gap /><Thumb $size="17px" /></Scroll>
              </ChartFrame>
            </Child>
            <Child $grow>
              <ChildTitle $h={31} $drop={4}>
                <WindowIcon /><TitleText>{'TICK-NYSE  TICK-NYSE[M]  5 Min   #4 | NYSE TICK'}</TitleText><ChildButtons />
              </ChildTitle>
              <ChartFrame>
                <Canvas $bg="#000">
                  <TickChart />
                  <Info $w={416} $ink="#fff">
                    <Tag $bg="#808080">{'Trade: 1@-653 '}</Tag><Tag>{'TICK-NYSE[M]  5 Min   #4'}</Tag><Tag $bg="#fff" $ink="#000">C: -90</Tag>
                    <Tag>T: 489</Tag><Tag $bg="#00c000" $ink="#000">Chg: 458</Tag><Tag $bg="#f00" $ink="#000">DChg: -429</Tag><Tag>2020-04-21</Tag>
                  </Info>
                  <Dpl $bg="#808080" $ink="#fff">DPL: 0P</Dpl>
                </Canvas>
                <Scroll><Gap /><Thumb $size="17px" /></Scroll>
              </ChartFrame>
            </Child>
          </LeftStack>
          <MainChild>
            <ChildTitle $h={32} $drop={6}>
              <WindowIcon /><TitleText>{'2 Min  TQQQ.BZ[M]  2 Min   #1  L:1 | Ultrapro QQQ Proshares'}</TitleText>
              <SmallButton $cut aria-label="Minimize"><MinGlyph /></SmallButton>
            </ChildTitle>
            <ChartFrame>
              <Canvas $bg="#fff">
                <MainChart />
                <Info $ink="#000">
                  <Tag $bg="#808080">{'Trade: 10@62.38 '}</Tag><Tag>{'TQQQ.BZ[M]  2 Min   #1'}</Tag><Tag $bg="#000" $ink="#fff">C: 57.20</Tag><Tag>T: 61</Tag>
                  <Tag $bg="#f00" $ink="#fff">Chg: -0.13</Tag><Tag $bg="#f00" $ink="#fff">DChg: -7.35</Tag>
                  <Tag>2020-04-21 11:25:33 H: 57.26 L: 57.02 O: 57.26 V: 10410 B: 57.20 A: 57.21 100x1500</Tag>
                  <Tag $bg="#000" $ink="#fff">TR: 27s</Tag><Tag>BV: 5560 AV: 4850 DV: 2847310</Tag><Tag $ink="#f00">34ema: 57.52</Tag>
                </Info>
                <Dpl $bg="#808080">DPL: 0.00P</Dpl>
              </Canvas>
              <Scroll open><Gap /></Scroll>
            </ChartFrame>
          </MainChild>
        </Desk>
        <VWrap><Scroll vertical><Thumb $blue $size="89%"><Grip vertical blue /></Thumb><Gap /></Scroll></VWrap>
        <HWrap><Scroll><Thumb><Grip /></Thumb><Gap $size="62px" /></Scroll></HWrap>
      </Workspace>
      <Tabs $h={22}>
        {['2 Min', '15 Min', '30 Min', 'Daily', 'A/D', 'TICK-NYSE'].map((t, i) => <Tab key={t} $on={i === 0}>{t}</Tab>)}
      </Tabs>
      <SettingsDialog />
    </Shell>
  );
}
